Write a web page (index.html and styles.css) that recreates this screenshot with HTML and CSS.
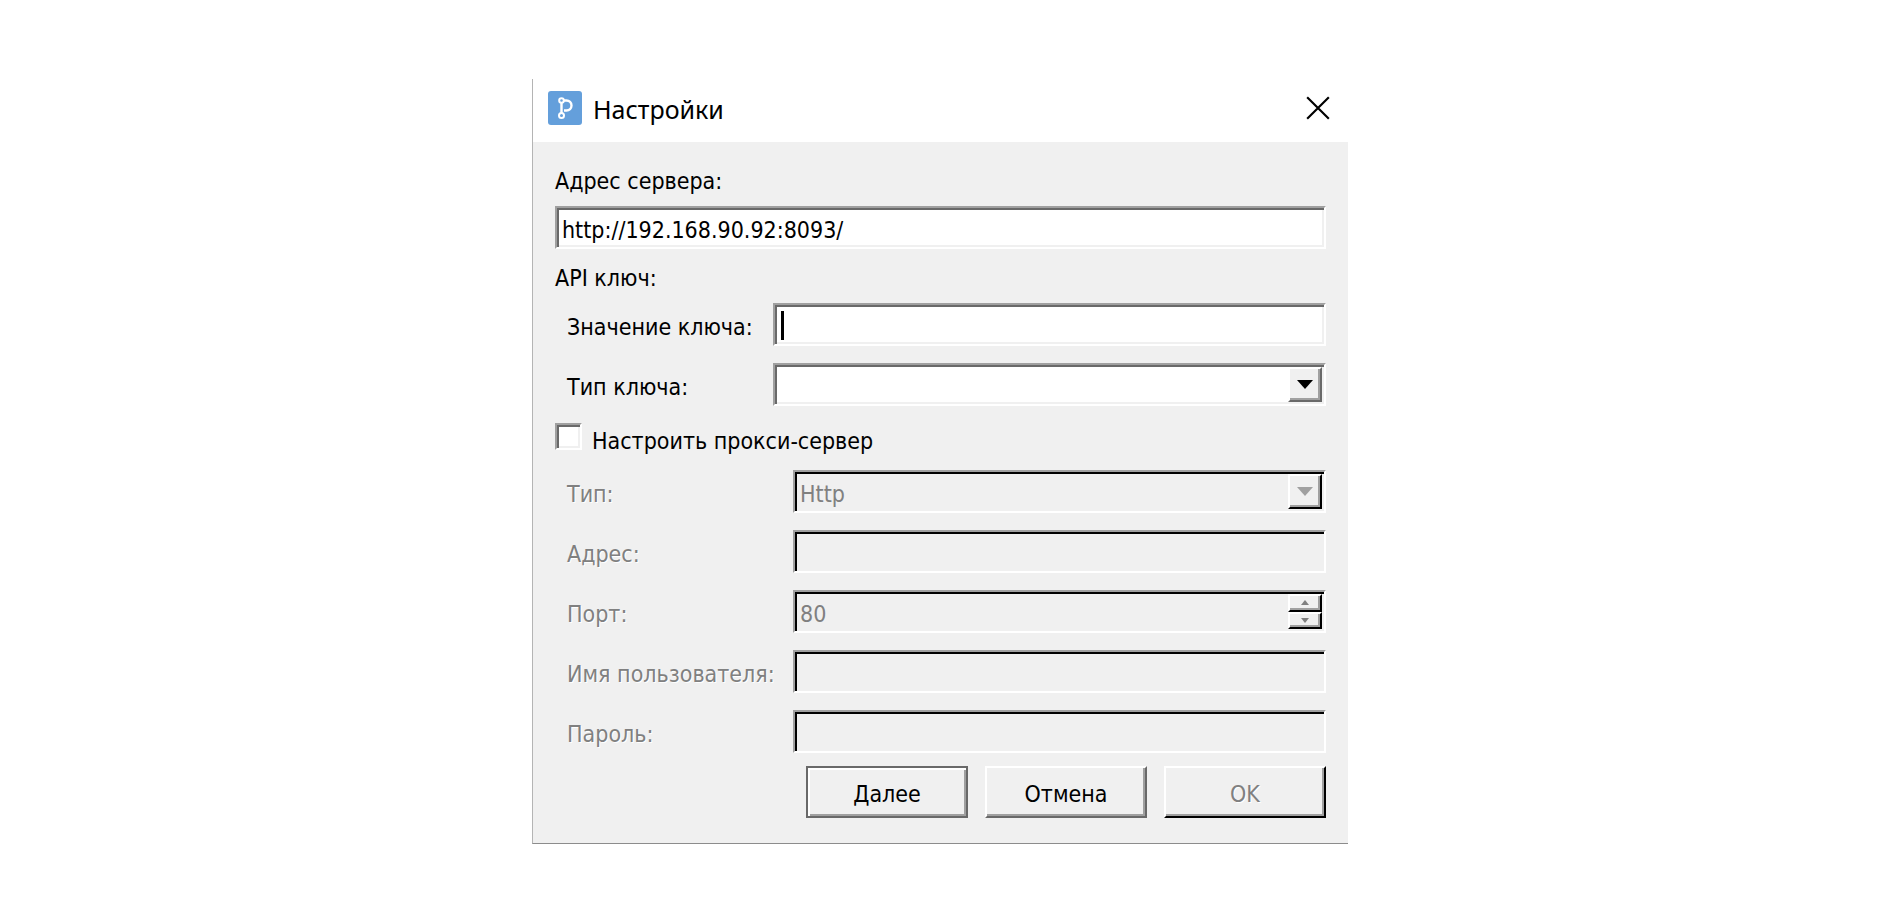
FILE: index.html
```html
<!DOCTYPE html>
<html lang="ru">
<head>
    <meta charset="UTF-8">
    <meta name="viewport" content="width=device-width, initial-scale=1.0">
    <title>Настройки</title>
    <link rel="stylesheet" href="styles.css">
</head>
<body>

    <main class="dialog">
        <header class="titlebar">
            <svg class="app-icon" viewBox="0 0 34 34" aria-hidden="true">
                <rect width="34" height="34" rx="3" fill="#649fdb"/>
                <g fill="none" stroke="#fff" stroke-width="2">
                    <circle cx="13.5" cy="9.5" r="2.3"/>
                    <circle cx="13.5" cy="24.5" r="2.5"/>
                    <path d="M13.5 12v10M16 9.5h2.5a5 5 0 0 1 0 10h-2.5" stroke-width="2.4"/>
                </g>
            </svg>
            <h1>Настройки</h1>
            <button type="button" class="close" aria-label="Закрыть">
                <svg viewBox="0 0 24 24"><path d="M2 2l20 20M22 2L2 22" fill="none" stroke="#000" stroke-width="2"/></svg>
            </button>
        </header>

        <form class="content">
            <label for="server">Адрес сервера:</label>
            <input type="text" class="field" id="server" value="http://192.168.90.92:8093/">

            <p class="group-title">API ключ:</p>
            <div class="rows key">
                <label for="key">Значение ключа:</label>
                <div class="control">
                    <input type="text" class="field" id="key">
                    <span class="caret"></span>
                </div>

                <label for="key-type">Тип ключа:</label>
                <div class="control">
                    <select class="field" id="key-type">
                        <option></option>
                    </select>
                    <span class="drop"></span>
                </div>
            </div>

            <div class="check">
                <input type="checkbox" id="use-proxy">
                <label for="use-proxy">Настроить прокси-сервер</label>
            </div>

            <div class="rows proxy">
                <label for="proxy-type">Тип:</label>
                <div class="control">
                    <select class="field" id="proxy-type" disabled>
                        <option>Http</option>
                    </select>
                    <span class="drop off"></span>
                </div>

                <label for="proxy-host">Адрес:</label>
                <input type="text" class="field" id="proxy-host" disabled>

                <label for="proxy-port">Порт:</label>
                <div class="control">
                    <input type="number" class="field" id="proxy-port" value="80" disabled>
                    <div class="spin">
                        <button type="button" class="up" aria-label="Больше" disabled></button>
                        <button type="button" class="down" aria-label="Меньше" disabled></button>
                    </div>
                </div>

                <label for="proxy-user">Имя пользователя:</label>
                <input type="text" class="field" id="proxy-user" disabled>

                <label for="proxy-pass">Пароль:</label>
                <input type="password" class="field" id="proxy-pass" disabled>
            </div>

            <div class="buttons">
                <button type="button" class="btn default">Далее</button>
                <button type="button" class="btn">Отмена</button>
                <button type="submit" class="btn" disabled>OK</button>
            </div>
        </form>
    </main>

</body>
</html>
```

FILE: styles.css
```css
* {
    box-sizing: border-box;
}

body {
    margin: 0;
    padding: 79px 16px 0;
    background-color: #fff;
    color: #000;
    font-family: "DejaVu Sans Condensed", "DejaVu Sans", sans-serif;
    font-stretch: condensed;
    font-size: 23px;
    line-height: 28px;
}

.dialog {
    max-width: 816px;
    margin: 0 auto;
    border-left: 1px solid #b4b4b4;
    border-bottom: 1px solid #8c8c8c;
}

/* title bar */
.titlebar {
    display: flex;
    align-items: center;
    height: 63px;
    padding: 0 17px 5px 15px;
}

.app-icon {
    width: 34px;
    height: 34px;
}

.titlebar h1 {
    flex: 1;
    margin: 2px 0 0 11px;
    font-family: "Noto Sans", "Open Sans", sans-serif;
    font-size: 25px;
    font-weight: normal;
}

.close {
    width: 26px;
    height: 26px;
    padding: 0;
    border: none;
    background: none;
}

.close svg {
    display: block;
}

/* form */
.content {
    display: flex;
    flex-direction: column;
    padding: 25px 22px;
    background-color: #f0f0f0;
}

.group-title {
    margin: 15px 0 11px;
}

#server {
    margin-top: 11px;
}

.rows {
    display: grid;
    row-gap: 17px;
    align-items: center;
    padding-left: 12px;
}

.rows label {
    padding-top: 4px;
}

.key {
    grid-template-columns: 206px 1fr;
}

.proxy {
    grid-template-columns: 226px 1fr;
    color: #808080;
    text-shadow: 1px 1px #fff;
}

.control {
    position: relative;
}

/* sunken boxes */
.field {
    display: block;
    width: 100%;
    height: 43px;
    margin: 0;
    padding: 4px 5px 0;
    border: 2px solid;
    border-color: #a0a0a0 #fff #fff #a0a0a0;
    border-radius: 0;
    outline: none;
    box-shadow: inset 2px 2px #696969, inset -2px -2px #f0f0f0;
    background-color: #fff;
    color: #000;
    font: inherit;
    appearance: none;
}

.field:disabled {
    box-shadow: inset 2px 2px #000;
    background-color: #f0f0f0;
    color: #808080;
    opacity: 1;
}

input[type="number"] {
    appearance: textfield;
}

.caret {
    position: absolute;
    top: 8px;
    left: 8px;
    width: 3px;
    height: 29px;
    background-color: #000;
}

.drop,
.spin {
    position: absolute;
    top: 4px;
    right: 4px;
    width: 34px;
    height: 35px;
}

/* raised boxes */
.drop,
.spin button,
.btn {
    border: 2px solid;
    border-color: #fff #696969 #696969 #fff;
    box-shadow: inset -2px -2px #a0a0a0;
    background-color: #f0f0f0;
}

.drop {
    display: flex;
    align-items: center;
    justify-content: center;
    pointer-events: none;
}

.drop::before {
    content: "";
    border: 8px solid transparent;
    border-top: 9px solid #000;
    border-bottom: none;
}

.drop.off {
    border-right-color: #000;
    border-bottom-color: #000;
}

.drop.off::before {
    border-top-color: #a0a0a0;
}

.spin {
    display: flex;
    flex-direction: column;
}

.spin button {
    display: flex;
    flex: 1;
    align-items: center;
    justify-content: center;
    padding: 0;
    border-right-color: #000;
    border-bottom-color: #000;
}

.spin button::before {
    content: "";
    border: 4px solid transparent;
}

.spin .up::before {
    border-top: none;
    border-bottom: 5px solid #808080;
}

.spin .down::before {
    border-top: 5px solid #808080;
    border-bottom: none;
}

/* proxy switch */
.check {
    display: flex;
    gap: 10px;
    margin: 17px 0 15px;
}

.check input {
    width: 27px;
    height: 27px;
    margin: 0;
    border: 2px solid;
    border-color: #a0a0a0 #fff #fff #a0a0a0;
    box-shadow: inset 2px 2px #696969, inset -2px -2px #f0f0f0;
    background-color: #fff;
    appearance: none;
}

.check label {
    padding-top: 4px;
}

/* bottom buttons */
.buttons {
    display: flex;
    justify-content: flex-end;
    gap: 17px;
    margin-top: 13px;
}

.btn {
    width: 162px;
    height: 52px;
    padding: 4px 0 0;
    color: #000;
    font: inherit;
}

.btn.default {
    border-color: #696969;
    box-shadow: inset 2px 2px #fff, inset -2px -2px #a0a0a0;
}

.btn:disabled {
    border-right-color: #000;
    border-bottom-color: #000;
    color: #808080;
    text-shadow: 1px 1px #fff;
}
```
